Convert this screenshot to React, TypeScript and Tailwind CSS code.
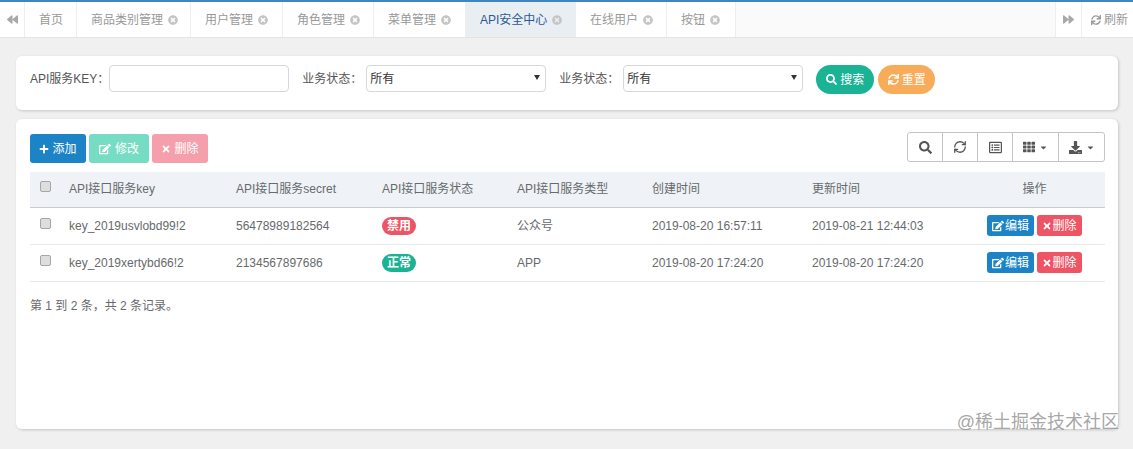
import React from 'react';
import {
  FaBackward,
  FaCaretDown,
  FaDownload,
  FaEdit,
  FaForward,
  FaPlus,
  FaRegListAlt,
  FaSearch,
  FaSync,
  FaTh,
  FaTimes,
  FaTimesCircle,
} from 'react-icons/fa';
import { RefreshCw } from 'lucide-react';

const tabs = [
  { name: '首页', width: 'w-[52px]' },
  { name: '商品类别管理', width: 'w-[114px]', close: true },
  { name: '用户管理', width: 'w-[92px]', close: true },
  { name: '角色管理', width: 'w-[91px]', close: true },
  { name: '菜单管理', width: 'w-[92px]', close: true },
  { name: 'API安全中心', width: 'w-[110px]', close: true, active: true },
  { name: '在线用户', width: 'w-[91px]', close: true },
  { name: '按钮', width: 'w-[69px]', close: true },
];

const rows = [
  {
    key: 'key_2019usvlobd99!2',
    secret: '56478989182564',
    enabled: false,
    type: '公众号',
    created: '2019-08-20 16:57:11',
    updated: '2019-08-21 12:44:03',
  },
  {
    key: 'key_2019xertybd66!2',
    secret: '2134567897686',
    enabled: true,
    type: 'APP',
    created: '2019-08-20 17:24:20',
    updated: '2019-08-20 17:24:20',
  },
];

const Check = () => (
  <input
    type="checkbox"
    className="mb-[5px] block h-[11px] w-[11px] appearance-none rounded-[2px] border border-[#a6a6a6] bg-[#dedede]"
  />
);

const StatusSelect = () => (
  <div className="relative h-[27px] w-[180px]">
    <select className="h-full w-full appearance-none rounded-[4px] border border-[#d8d8d8] bg-white pt-[1px] pl-[3px] text-[12px] text-[#333] outline-none">
      <option>所有</option>
    </select>
    <svg viewBox="0 0 6 5" className="pointer-events-none absolute top-[10px] right-[6px] h-[5px] w-[6px]">
      <path d="M0 0h6L3 5z" fill="#333" />
    </svg>
  </div>
);

const ToolButton = ({ children, width }: { children: React.ReactNode; width: string }) => (
  <button
    type="button"
    className={`flex h-full items-center justify-center gap-[4px] border-r border-[#c4c4c4] text-[#555] last:border-r-0 ${width}`}
  >
    {children}
  </button>
);

export default function App() {
  return (
    <div className="relative flex h-screen flex-col overflow-hidden border-t-2 border-[#3f86bf] bg-[#f0f0f0] font-['Liberation_Sans','Noto_Sans_CJK_SC',sans-serif] text-[12px] text-[#676a6c]">
      <div className="flex h-[36px] shrink-0 border-b border-[#e4e4e4] bg-[#fafafa]">
        <button type="button" className="flex w-[25px] items-center justify-center border-r border-[#eeeeee] bg-white text-[#a8a8a8]">
          <FaBackward size={11} />
        </button>
        {tabs.map((tab) => (
          <div
            key={tab.name}
            className={`flex items-center border-r border-[#eeeeee] pl-[14px] ${tab.width} ${tab.active ? 'bg-[#e9eef2] text-[#2c5a96]' : 'bg-white text-[#999]'}`}
          >
            <span className="whitespace-nowrap">{tab.name}</span>
            {tab.close && <FaTimesCircle size={10} className="ml-[5px] text-[#c4c4c4]" />}
          </div>
        ))}
        <div className="flex-1" />
        <button type="button" className="flex w-[27px] items-center justify-center border-x border-[#eeeeee] bg-white text-[#a8a8a8]">
          <FaForward size={11} />
        </button>
        <button type="button" className="flex w-[51px] items-center gap-[3px] bg-white pl-[9px] text-[#999]">
          <FaSync size={10} />
          <span>刷新</span>
        </button>
      </div>

      <div className="mt-[18px] mr-[15px] ml-[16px] flex h-[54px] shrink-0 items-start rounded-[6px] bg-white pt-[9px] pl-[14px] shadow-[1px_1px_3px_rgba(0,0,0,0.18)]">
        <label className="flex h-[27px] items-center pt-[1px] text-[#555]">API服务KEY：</label>
        <input className="h-[27px] w-[180px] rounded-[4px] border border-[#d8d8d8] bg-white outline-none" />
        <label className="ml-[13px] flex h-[27px] w-[64px] items-center pt-[1px] text-[#555]">业务状态：</label>
        <StatusSelect />
        <label className="ml-[13px] flex h-[27px] w-[64px] items-center pt-[1px] text-[#555]">业务状态：</label>
        <StatusSelect />
        <button type="button" className="ml-[13px] flex h-[29px] w-[58px] items-center justify-center gap-[3px] rounded-full bg-[#1ab394] text-white">
          <FaSearch size={11} />
          <span>搜索</span>
        </button>
        <button type="button" className="ml-[4px] flex h-[29px] w-[57px] items-center justify-center gap-[3px] rounded-full bg-[#f8ac59] text-white">
          <FaSync size={11} />
          <span>重置</span>
        </button>
      </div>

      <div className="mt-[9px] mr-[15px] ml-[16px] h-[310px] shrink-0 rounded-[6px] bg-white pt-[13px] pr-[13px] pl-[14px] shadow-[1px_1px_3px_rgba(0,0,0,0.18)]">
        <div className="flex h-[40px] items-start justify-between">
          <div className="flex gap-[3px] pt-[2px]">
            <button type="button" className="flex h-[29px] w-[56px] items-center justify-center gap-[3px] rounded-[3px] bg-[#1c84c6] text-white">
              <FaPlus size={10} />
              <span>添加</span>
            </button>
            <button type="button" className="flex h-[29px] w-[60px] items-center justify-center gap-[4px] rounded-[3px] bg-[#76dcc4] text-white">
              <FaEdit size={12} />
              <span>修改</span>
            </button>
            <button type="button" className="flex h-[29px] w-[56px] items-center justify-center gap-[3px] rounded-[3px] bg-[#f59fac] text-white">
              <FaTimes size={10} />
              <span>删除</span>
            </button>
          </div>
          <div className="flex h-[30px] items-center rounded-[3px] border border-[#c4c4c4]">
            <ToolButton width="w-[35px]">
              <FaSearch size={13} />
            </ToolButton>
            <ToolButton width="w-[35px]">
              <RefreshCw size={14} strokeWidth={2.25} />
            </ToolButton>
            <ToolButton width="w-[35px]">
              <FaRegListAlt size={13} />
            </ToolButton>
            <ToolButton width="w-[46px]">
              <FaTh size={12} />
              <FaCaretDown size={9} />
            </ToolButton>
            <ToolButton width="w-[45px]">
              <FaDownload size={13} />
              <FaCaretDown size={9} />
            </ToolButton>
          </div>
        </div>

        <table className="w-[1075px] table-fixed border-collapse">
          <colgroup>
            <col className="w-[31px]" />
            <col className="w-[167px]" />
            <col className="w-[146px]" />
            <col className="w-[135px]" />
            <col className="w-[135px]" />
            <col className="w-[160px]" />
            <col className="w-[160px]" />
            <col className="w-[141px]" />
          </colgroup>
          <thead>
            <tr className="h-[35px] border-b border-[#c8ccd0] bg-[#eff3f7] text-left">
              <th className="pl-[10px] font-normal"><Check /></th>
              <th className="pl-[8px] font-normal">API接口服务key</th>
              <th className="pl-[8px] font-normal">API接口服务secret</th>
              <th className="pl-[8px] font-normal">API接口服务状态</th>
              <th className="pl-[8px] font-normal">API接口服务类型</th>
              <th className="pl-[8px] font-normal">创建时间</th>
              <th className="pl-[8px] font-normal">更新时间</th>
              <th className="text-center font-normal">操作</th>
            </tr>
          </thead>
          <tbody>
            {rows.map((row) => (
              <tr key={row.key} className="h-[37px] border-b border-[#e7eaec]">
                <td className="pl-[10px]"><Check /></td>
                <td className="pl-[8px]">{row.key}</td>
                <td className="pl-[8px]">{row.secret}</td>
                <td className="pl-[8px]">
                  <span className={`inline-flex h-[18px] w-[34px] items-center justify-center rounded-full font-bold text-white ${row.enabled ? 'bg-[#1ab394]' : 'bg-[#ed5565]'}`}>
                    {row.enabled ? '正常' : '禁用'}
                  </span>
                </td>
                <td className="pl-[8px]">{row.type}</td>
                <td className="pl-[8px]">{row.created}</td>
                <td className="pl-[8px]">{row.updated}</td>
                <td>
                  <div className="flex justify-center gap-[3px]">
                    <button type="button" className="flex h-[21px] w-[47px] items-center justify-center gap-[1px] rounded-[3px] bg-[#1c84c6] text-white">
                      <FaEdit size={12} />
                      <span>编辑</span>
                    </button>
                    <button type="button" className="flex h-[21px] w-[45px] items-center justify-center rounded-[3px] bg-[#ed5565] text-white">
                      <FaTimes size={10} />
                      <span>删除</span>
                    </button>
                  </div>
                </td>
              </tr>
            ))}
          </tbody>
        </table>

        <p className="mt-[15px] text-[#676a6c]">第 1 到 2 条，共 2 条记录。</p>
      </div>

      <span className="absolute top-[408px] right-[14px] text-[18px] leading-[24px] whitespace-nowrap text-[#8f8f8f]/80">
        @稀土掘金技术社区
      </span>
    </div>
  );
}
